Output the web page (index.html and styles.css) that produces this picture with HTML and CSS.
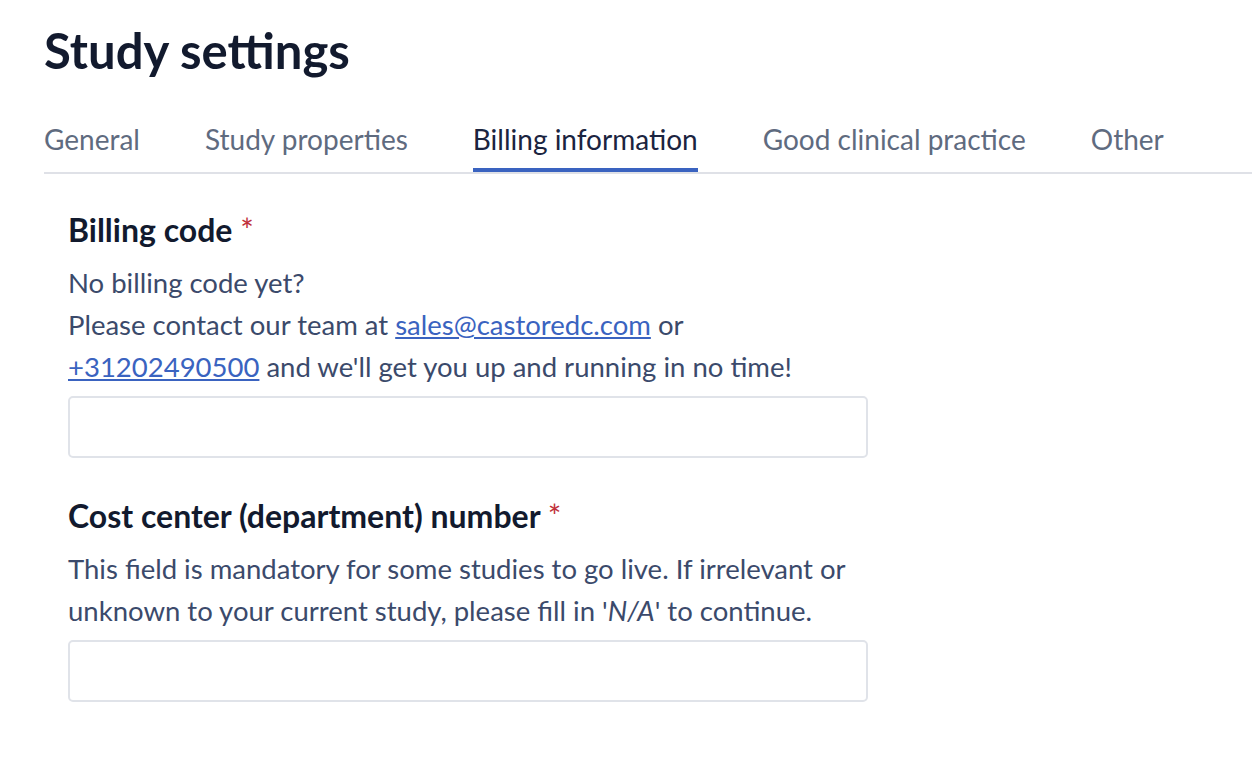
FILE: index.html
```html
<!DOCTYPE html>
<html lang="en">
<head>
    <meta charset="UTF-8">
    <meta name="viewport" content="width=device-width, initial-scale=1.0">
    <title>Study settings</title>
    <link rel="stylesheet" href="styles.css">
</head>
<body>
    <div class="page">
        <h1 class="page-title">Study settings</h1>

        <nav class="tabs">
            <a class="tab">General</a>
            <a class="tab">Study properties</a>
            <a class="tab active">Billing information</a>
            <a class="tab">Good clinical practice</a>
            <a class="tab">Other</a>
        </nav>

        <form class="settings-form">
            <div class="field">
                <label class="field-label" for="billing-code">Billing code <span class="required">*</span></label>
                <p class="field-help">
                    No billing code yet?<br>
                    Please contact our team at <a href="#">sales@castoredc.com</a> or<br>
                    <a href="#">+31202490500</a> and we'll get you up and running in no time!
                </p>
                <input type="text" id="billing-code" class="text-input">
            </div>

            <div class="field">
                <label class="field-label" for="cost-center">Cost center (department) number <span class="required">*</span></label>
                <p class="field-help">
                    This field is mandatory for some studies to go live. If irrelevant or<br>
                    unknown to your current study, please fill in '<em>N/A</em>' to continue.
                </p>
                <input type="text" id="cost-center" class="text-input">
            </div>
        </form>
    </div>
</body>
</html>
```

FILE: styles.css
```css
/* General Page Styling */
body {
    margin: 0;
    padding: 0;
    background-color: #ffffff;
    font-family: "Lato", "Open Sans", sans-serif;
    color: #3b4a6b;
}

.page {
    padding: 22px 0 0 44px;
}

/* Title */
.page-title {
    margin: 0;
    font-size: 49px;
    line-height: 56px;
    font-weight: 700;
    color: #121a2e;
}

/* Tabs */
.tabs {
    display: flex;
    gap: 65px;
    margin-top: 43px;
    border-bottom: 2px solid #dfe1e7;
}
.tab {
    font-size: 28px;
    line-height: 36px;
    padding-bottom: 11px;
    color: #5f6b7f;
    border-bottom: 4px solid transparent;
    cursor: pointer;
}
.tab.active {
    color: #1b2440;
    border-bottom-color: #3a63c0;
}

/* Form */
.settings-form {
    padding: 36px 0 0 24px;
}
.field {
    margin-bottom: 38px;
}
.field-label {
    display: block;
    font-size: 32px;
    line-height: 40px;
    font-weight: 700;
    color: #121a2e;
}
.required {
    color: #c0303a;
    font-weight: 400;
}
.field-help {
    margin: 12px 0 8px;
    font-size: 27.5px;
    line-height: 42px;
}
.field-help a {
    color: #3a63c0;
    text-decoration: underline;
}
.text-input {
    display: block;
    box-sizing: border-box;
    width: 800px;
    height: 62px;
    border: 2px solid #e0e3e9;
    border-radius: 5px;
    background: #ffffff;
    font-family: inherit;
    font-size: 27px;
    padding: 0 16px;
}
```
